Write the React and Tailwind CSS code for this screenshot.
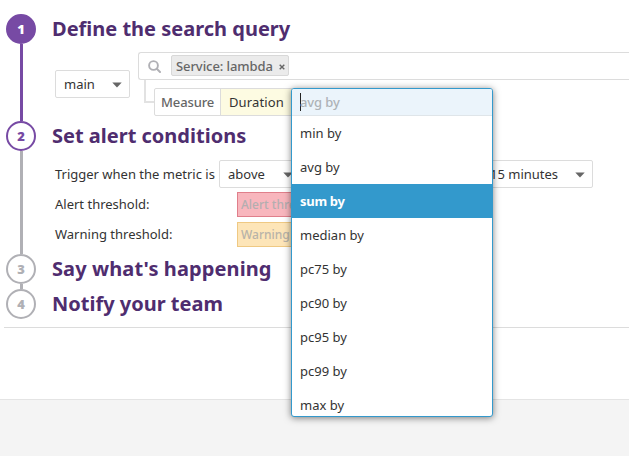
import React from "react";

const OPTIONS = ["min by", "avg by", "sum by", "median by", "pc75 by", "pc90 by", "pc95 by", "pc99 by", "max by"];

function Caret() {
  return (
    <svg width="10" height="6" viewBox="0 0 10 6" className="mt-0.5 shrink-0">
      <path d="M0.3 0.5h9.4L5 5.6z" fill="#666" />
    </svg>
  );
}

function Select({ label, className }) {
  return (
    <div className={`flex h-7 items-center justify-between rounded-[2px] border border-[#dcdcdc] bg-white pr-[7px] pl-2 ${className}`}>
      <span>{label}</span>
      <Caret />
    </div>
  );
}

function Step({ number, title, circle, line, className, titleClass = "", children }) {
  return (
    <section className={`flex ${className}`}>
      <div className="ml-1.5 flex w-[30px] shrink-0 flex-col items-center">
        <div className={`flex size-[30px] shrink-0 items-center justify-center rounded-full border-2 text-[13px] font-black ${circle}`}>
          {number}
        </div>
        {line && <div className={`w-[3px] flex-1 ${line}`} />}
      </div>
      <div className="ml-4 min-w-0 flex-1">
        <h2 className={`h-[30px] text-[20px] leading-[30px] font-bold text-[#4f2d6f] ${titleClass}`}>{title}</h2>
        {children}
      </div>
    </section>
  );
}

function AggregationMenu() {
  return (
    <div className="absolute top-0 left-[137px] z-10 h-[329px] w-[202px] overflow-hidden rounded-[3px] border border-[#3399cc] bg-white text-[#333] shadow-[0_1px_7px_rgba(0,0,0,0.5)]">
      <div className="flex h-[27px] items-center border-b border-[#dfe5e9] bg-[#ebf4fb] pl-2 font-medium tracking-[-0.1px] text-[#aeb2b6]">
        <span className="-mr-px h-[18px] w-px bg-[#222]" />
        <span>avg by</span>
      </div>
      <ul>
        {OPTIONS.map((option) => (
          <li
            key={option}
            className={`h-[34px] pl-2 leading-[35px] ${option === "sum by" ? "bg-[#3399cc] font-bold tracking-[-0.3px] text-white" : ""}`}
          >
            {option}
          </li>
        ))}
      </ul>
    </div>
  );
}

export default function App() {
  return (
    <div className="flex h-[456px] w-[629px] flex-col overflow-hidden bg-white pt-3.5 font-['Noto_Sans','Open_Sans',sans-serif] text-[13px] leading-[18px] text-[#333]">
      <Step number="1" title="Define the search query" circle="border-[#774aa4] bg-[#774aa4] text-white" line="bg-[#774aa4]" className="h-[107px]">
        <div className="flex pt-2 pl-[3px]">
          <Select label="main" className="mt-[18px] w-[75px]" />
          <div className="ml-2 flex-1">
            <div className="flex h-7 items-center rounded-l-[3px] border border-r-0 border-[#dcdcdc] pl-[9px]">
              <svg width="13" height="13" viewBox="0 0 13 13" fill="none" stroke="#b0b0b5" strokeLinecap="round">
                <circle cx="5.5" cy="5.5" r="4.4" strokeWidth="1.9" />
                <path d="M9 9l3 3" strokeWidth="2" />
              </svg>
              <div className="-mt-px ml-2.5 flex h-[21px] items-center rounded-[2px] border border-[#d8d8d8] bg-[#ebebeb] pr-[3px] pl-1 font-medium tracking-[-0.08px] text-[#666]">
                <span>Service: lambda</span>
                <svg width="6" height="6" viewBox="0 0 6 6" className="mt-0.5 ml-1.5">
                  <path d="M.7.7l4.6 4.6M5.3.7L.7 5.3" stroke="#666" strokeWidth="1.4" />
                </svg>
              </div>
            </div>
            <div className="flex pl-1.5">
              <div className="h-[23px] w-2.5 border-b-2 border-l-2 border-[#e2e2e2]" />
              <div className="relative mt-2 flex h-7 rounded-[2px] border border-[#dcdcdc]">
                <div className="flex w-[66px] items-center border-r border-[#dcdcdc] pl-1.5 font-medium tracking-[-0.12px] text-[#666]">Measure</div>
                <div className="flex w-[71px] items-center bg-[#fdfbe2] pl-2 tracking-[0.12px]">Duration</div>
                <div className="absolute -top-px -left-px">
                  <AggregationMenu />
                </div>
              </div>
            </div>
          </div>
        </div>
      </Step>

      <Step number="2" title="Set alert conditions" circle="border-[#774aa4] bg-white text-[#774aa4]" line="bg-[#b0b0b5]" className="h-[133px]">
        <div className="pt-[9px] pl-[3px]">
          <div className="flex h-7 items-center">
            <span className="w-[164px] whitespace-nowrap">Trigger when the metric is</span>
            <Select label="above" className="w-[82px]" />
            <Select label="15 minutes" className="ml-[180px] w-[112px]" />
          </div>
          <div className="mt-1 flex h-[25px] items-center">
            <span className="-mt-0.5 w-[182px]">Alert threshold:</span>
            <div className="h-full w-[60px] overflow-hidden border border-[#e07f8b] bg-[#f8b6bd] pl-[3px] text-[12px] leading-[23px] font-medium whitespace-nowrap text-[#b3aeb0]">Alert threshold</div>
          </div>
          <div className="mt-[5px] flex h-[25px] items-center">
            <span className="-mt-0.5 w-[182px]">Warning threshold:</span>
            <div className="h-full w-[60px] overflow-hidden border border-[#efc983] bg-[#fde5b8] pl-[3px] text-[12px] leading-[23px] font-medium whitespace-nowrap text-[#b8b3a9]">Warning threshold</div>
          </div>
        </div>
      </Step>

      <Step number="3" title="Say what's happening" titleClass="tracking-[0.1px]" circle="border-[#b0b0b5] bg-white text-[#b0b0b5]" line="bg-[#b0b0b5]" className="h-[35px]" />
      <Step number="4" title="Notify your team" circle="border-[#b0b0b5] bg-white text-[#b0b0b5]" className="h-[38px]" />

      <div className="ml-1 h-[72px] border-t border-[#dcdcdc]" />
      <footer className="flex-1 border-t border-[#e4e4e4] bg-[#f4f4f4]" />
    </div>
  );
}
